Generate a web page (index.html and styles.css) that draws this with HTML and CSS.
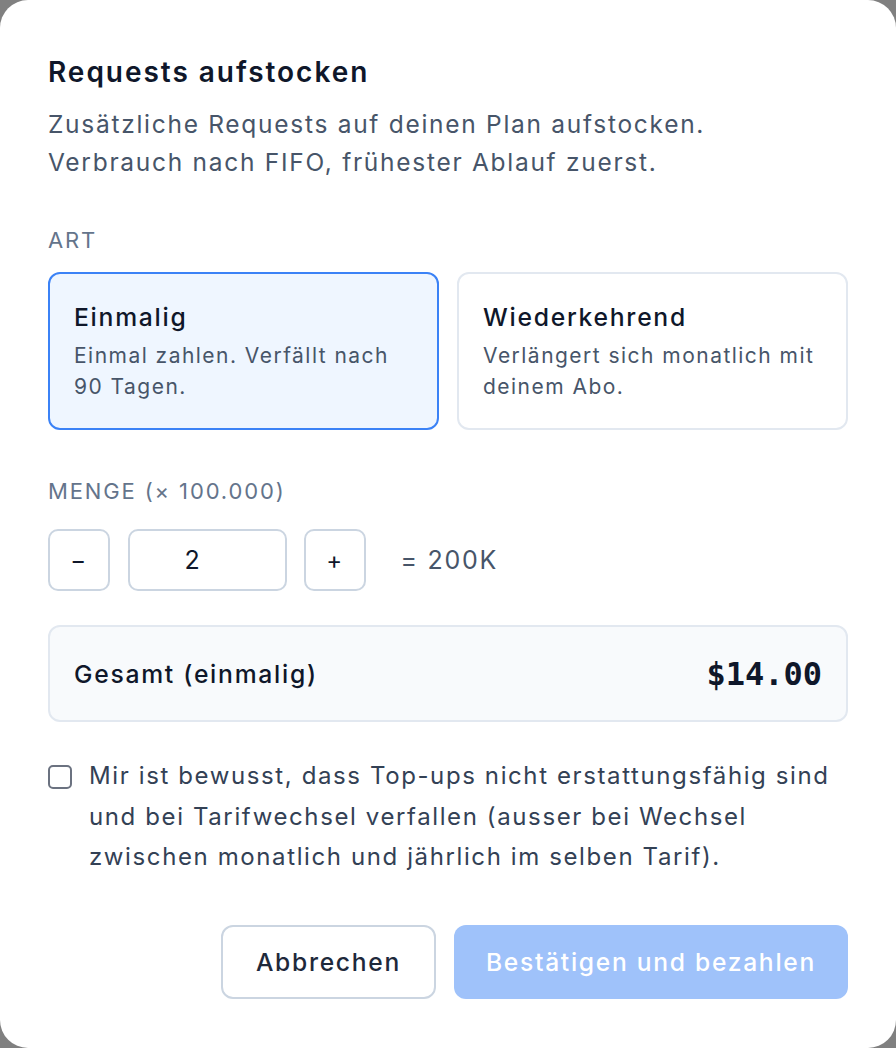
FILE: index.html
```html
<!DOCTYPE html>
<html lang="de">
<head>
  <meta charset="UTF-8">
  <title>Requests aufstocken</title>
  <link rel="stylesheet" href="styles.css">
</head>
<body>
  <div class="dialog">
    <h2 class="titel">Requests aufstocken</h2>
    <p class="beschreibung">Zusätzliche Requests auf deinen Plan aufstocken.<br>Verbrauch nach FIFO, frühester Ablauf zuerst.</p>

    <div class="label">Art</div>
    <div class="optionen">
      <button class="option aktiv">
        <span class="option-titel">Einmalig</span>
        <span class="option-text">Einmal zahlen. Verfällt nach 90 Tagen.</span>
      </button>
      <button class="option">
        <span class="option-titel">Wiederkehrend</span>
        <span class="option-text">Verlängert sich monatlich mit deinem Abo.</span>
      </button>
    </div>

    <div class="label menge-label">Menge (× 100.000)</div>
    <div class="menge">
      <button class="schritt">−</button>
      <input class="anzahl" type="text" value="2">
      <button class="schritt">+</button>
      <span class="ergebnis">= 200K</span>
    </div>

    <div class="gesamt">
      <span>Gesamt (einmalig)</span>
      <span class="preis">$14.00</span>
    </div>

    <label class="bestaetigung">
      <span class="checkbox"></span>
      <span>Mir ist bewusst, dass Top-ups nicht erstattungsfähig sind und bei Tarifwechsel verfallen (ausser bei Wechsel zwischen monatlich und jährlich im selben Tarif).</span>
    </label>

    <div class="aktionen">
      <button class="knopf abbrechen">Abbrechen</button>
      <button class="knopf bezahlen" disabled>Bestätigen und bezahlen</button>
    </div>
  </div>
</body>
</html>
```

FILE: styles.css
```css
* {
  box-sizing: border-box;
  letter-spacing: 0.07em;
}

body {
  margin: 0;
  background-color: #808080;
  font-family: Inter, "Noto Sans", sans-serif;
  color: #0f172a;
}

button,
input {
  font-family: inherit;
}

.dialog {
  width: 896px;
  height: 1048px;
  background: #ffffff;
  border-radius: 28px;
  padding: 52px 48px 48px;
}

.titel {
  margin: 0;
  font-size: 28px;
  line-height: 40px;
  font-weight: 600;
  color: #0f172a;
}

.beschreibung {
  margin: 14px 0 0;
  font-size: 24.5px;
  line-height: 37.5px;
  color: #475569;
}

.label {
  margin-top: 45px;
  font-size: 22px;
  line-height: 28px;
  letter-spacing: 0.085em;
  text-transform: uppercase;
  color: #64748b;
}

.optionen {
  display: grid;
  grid-template-columns: 1fr 1fr;
  gap: 18px;
  margin-top: 18px;
}

.option {
  display: flex;
  flex-direction: column;
  align-items: flex-start;
  text-align: left;
  height: 158px;
  padding: 26px 24px;
  background: #ffffff;
  border: 2px solid #e2e8f0;
  border-radius: 12px;
  cursor: pointer;
}

.option.aktiv {
  background: #eff6ff;
  border-color: #3b82f6;
}

.option-titel {
  font-size: 24.7px;
  line-height: 34px;
  font-weight: 500;
  color: #0f172a;
}

.option-text {
  margin-top: 6px;
  font-size: 21px;
  line-height: 31px;
  color: #475569;
}

.menge-label {
  margin-top: 47px;
}

.menge {
  display: flex;
  align-items: center;
  gap: 17.5px;
  margin-top: 24px;
}

.schritt {
  width: 62px;
  height: 62px;
  background: #ffffff;
  border: 2px solid #cbd5e1;
  border-radius: 10px;
  font-size: 24px;
  color: #0f172a;
  cursor: pointer;
}

.anzahl {
  width: 159px;
  height: 62px;
  padding: 0 28px 0 0;
  border: 2px solid #cbd5e1;
  border-radius: 10px;
  text-align: center;
  font-size: 25px;
  color: #0f172a;
}

.ergebnis {
  margin-left: 17px;
  font-size: 25px;
  color: #475569;
}

.gesamt {
  display: flex;
  justify-content: space-between;
  align-items: center;
  height: 97px;
  margin-top: 34px;
  padding: 0 24px;
  background: #f8fafc;
  border: 2px solid #e2e8f0;
  border-radius: 12px;
  font-size: 24.7px;
  font-weight: 500;
}

.preis {
  font-family: "DejaVu Sans Mono", monospace;
  font-weight: 700;
  font-size: 32px;
  letter-spacing: 0;
}

.bestaetigung {
  display: flex;
  gap: 17px;
  margin-top: 34px;
  font-size: 24px;
  line-height: 40.5px;
  letter-spacing: 0.067em;
  color: #334155;
}

.bestaetigung span {
  letter-spacing: inherit;
}

.checkbox {
  flex: none;
  width: 24px;
  height: 24px;
  margin-top: 9px;
  border: 2px solid #6b7280;
  border-radius: 5px;
  background: #ffffff;
}

.aktionen {
  display: flex;
  justify-content: flex-end;
  gap: 18px;
  margin-top: 47px;
}

.knopf {
  height: 74px;
  border-radius: 12px;
  font-size: 24.6px;
  font-weight: 500;
  cursor: pointer;
}

.abbrechen {
  padding: 0 33px;
  background: #ffffff;
  border: 2px solid #cbd5e1;
  color: #1e293b;
}

.bezahlen {
  padding: 0 30px;
  background: #9fc2fa;
  border: 2px solid transparent;
  color: #ffffff;
  cursor: not-allowed;
}
```
